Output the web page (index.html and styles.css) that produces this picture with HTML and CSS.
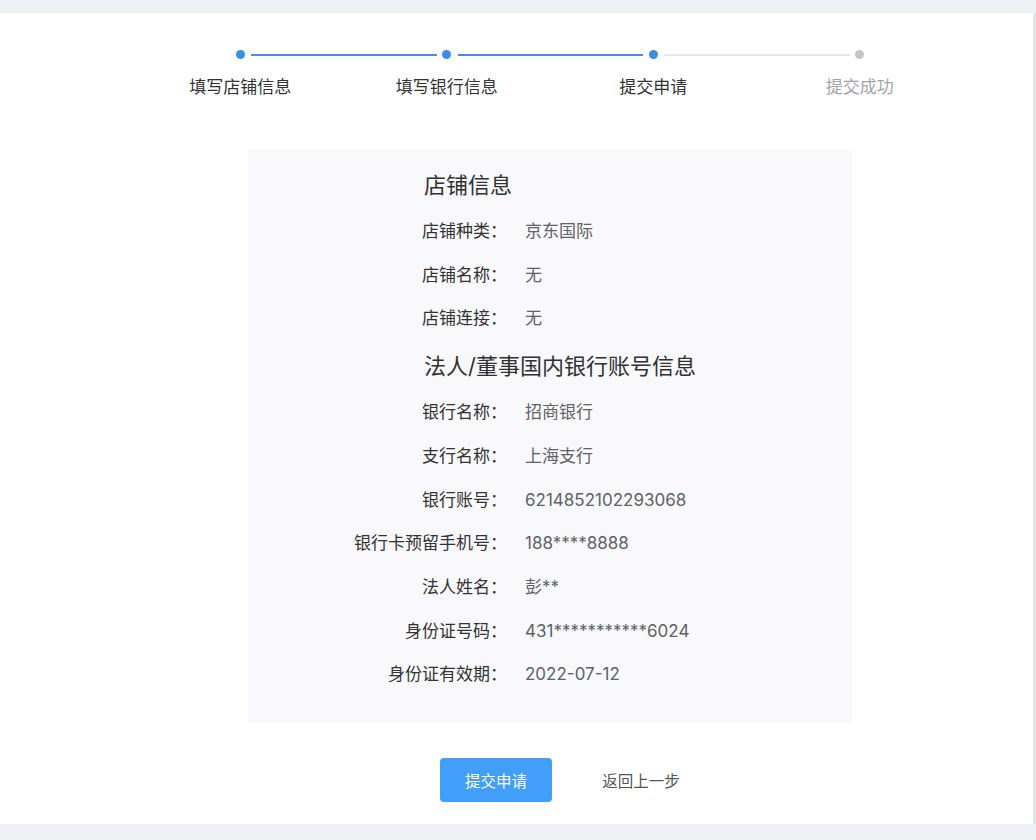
FILE: index.html
```html
<!DOCTYPE html>
<html lang="zh-CN">
<head>
    <meta charset="UTF-8">
    <meta name="viewport" content="width=device-width, initial-scale=1.0">
    <title>提交申请</title>
    <link rel="stylesheet" href="styles.css">
</head>
<body>
    <div class="page">
        <div class="card">
            <div class="content">
                <div class="steps">
                    <div class="step done">
                        <span class="step-dot"></span>
                        <span class="step-title">填写店铺信息</span>
                    </div>
                    <div class="step done">
                        <span class="step-dot"></span>
                        <span class="step-title">填写银行信息</span>
                    </div>
                    <div class="step active">
                        <span class="step-dot"></span>
                        <span class="step-title">提交申请</span>
                    </div>
                    <div class="step wait">
                        <span class="step-dot"></span>
                        <span class="step-title">提交成功</span>
                    </div>
                </div>

                <div class="info-panel">
                    <h3 class="info-title">店铺信息</h3>
                    <div class="info-row"><label>店铺种类：</label><span>京东国际</span></div>
                    <div class="info-row"><label>店铺名称：</label><span>无</span></div>
                    <div class="info-row"><label>店铺连接：</label><span>无</span></div>

                    <h3 class="info-title">法人/董事国内银行账号信息</h3>
                    <div class="info-row"><label>银行名称：</label><span>招商银行</span></div>
                    <div class="info-row"><label>支行名称：</label><span>上海支行</span></div>
                    <div class="info-row"><label>银行账号：</label><span>6214852102293068</span></div>
                    <div class="info-row"><label>银行卡预留手机号：</label><span>188****8888</span></div>
                    <div class="info-row"><label>法人姓名：</label><span>彭**</span></div>
                    <div class="info-row"><label>身份证号码：</label><span>431***********6024</span></div>
                    <div class="info-row"><label>身份证有效期：</label><span>2022-07-12</span></div>
                </div>

                <div class="actions">
                    <button class="btn btn-primary">提交申请</button>
                    <button class="btn btn-text">返回上一步</button>
                </div>
            </div>
        </div>
    </div>
</body>
</html>
```

FILE: styles.css
```css
html,
body {
    margin: 0;
    padding: 0;
}

body {
    font-family: Inter, "Noto Sans CJK SC", sans-serif;
    background: #f0f1f4;
    color: #333333;
}

.page {
    height: 840px;
    padding-top: 13px;
    box-sizing: border-box;
    background: #eef0f3;
}

.card {
    width: 1033px;
    height: 811px;
    background: #ffffff;
    border-right: 3px solid #e4e5e8;
}

.content {
    width: 826px;
    margin-left: 137px;
    padding-top: 37px;
}

/* steps */
.steps {
    display: grid;
    grid-template-columns: repeat(4, 1fr);
}

.step {
    position: relative;
    display: flex;
    flex-direction: column;
    align-items: center;
}

.step-dot {
    width: 9px;
    height: 9px;
    border-radius: 50%;
    background: #3a8ee6;
}

.step::after {
    content: "";
    position: absolute;
    top: 4px;
    left: calc(50% + 11px);
    width: calc(100% - 21px);
    height: 2px;
    background: #4a90d6;
}

.step:last-child::after {
    display: none;
}

.step.active::after {
    background: #e6e7ea;
}

.step.wait .step-dot {
    background: #c4c5c8;
}

.step-title {
    margin-top: 16px;
    font-size: 17px;
    line-height: 24px;
    color: #333333;
}

.step.wait .step-title {
    color: #a3a3a6;
}

/* info */
.info-panel {
    width: 604px;
    margin: 51px auto 0;
    padding: 10px 0 26px;
    background: #f9f9fb;
}

.info-title {
    margin: 0;
    padding-left: 176px;
    font-size: 22px;
    font-weight: 400;
    line-height: 50px;
    color: #303133;
}

.info-row {
    display: flex;
    font-size: 17px;
    line-height: 43.7px;
}

.info-row label {
    width: 259px;
    text-align: right;
    color: #333333;
}

.info-row span {
    margin-left: 18px;
    color: #606266;
}

/* buttons */
.actions {
    display: flex;
    margin-top: 35px;
    padding-left: 303px;
}

.btn {
    width: 112px;
    height: 44px;
    border: none;
    border-radius: 4px;
    font-family: inherit;
    font-size: 15.5px;
    cursor: pointer;
}

.btn-primary {
    color: #ffffff;
    background: #419ffa;
}

.btn-text {
    margin-left: 33px;
    color: #555555;
    background: transparent;
}
```
